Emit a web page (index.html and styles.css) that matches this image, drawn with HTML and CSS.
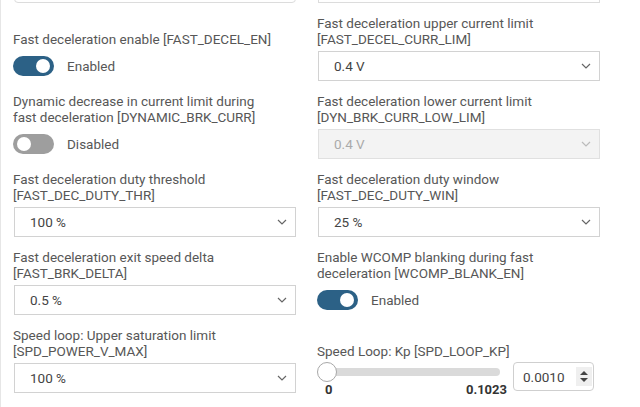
FILE: index.html
```html
<!DOCTYPE html>
<html>
<head>
<meta charset="utf-8">
<link rel="stylesheet" href="styles.css">
</head>
<body>
<div class="panel">
  <div class="grid">
    <div class="cell"><div class="box round"></div></div>
    <div class="cell"><div class="box"></div></div>

    <div class="cell">
      <div class="label">Fast deceleration enable [FAST_DECEL_EN]</div>
      <div class="control"><span class="toggle on"></span><span class="state">Enabled</span></div>
    </div>
    <div class="cell">
      <div class="label">Fast deceleration upper current limit<br>[FAST_DECEL_CURR_LIM]</div>
      <div class="control"><div class="select"><span>0.4 V</span><svg class="chev" width="10" height="6" viewBox="0 0 10 6"><polyline points="1,1 5,5 9,1"/></svg></div></div>
    </div>

    <div class="cell">
      <div class="label">Dynamic decrease in current limit during<br>fast deceleration [DYNAMIC_BRK_CURR]</div>
      <div class="control"><span class="toggle"></span><span class="state">Disabled</span></div>
    </div>
    <div class="cell">
      <div class="label">Fast deceleration lower current limit<br>[DYN_BRK_CURR_LOW_LIM]</div>
      <div class="control"><div class="select disabled"><span>0.4 V</span><svg class="chev" width="10" height="6" viewBox="0 0 10 6"><polyline points="1,1 5,5 9,1"/></svg></div></div>
    </div>

    <div class="cell">
      <div class="label">Fast deceleration duty threshold<br>[FAST_DEC_DUTY_THR]</div>
      <div class="control"><div class="select"><span>100 %</span><svg class="chev" width="10" height="6" viewBox="0 0 10 6"><polyline points="1,1 5,5 9,1"/></svg></div></div>
    </div>
    <div class="cell">
      <div class="label">Fast deceleration duty window<br>[FAST_DEC_DUTY_WIN]</div>
      <div class="control"><div class="select"><span>25 %</span><svg class="chev" width="10" height="6" viewBox="0 0 10 6"><polyline points="1,1 5,5 9,1"/></svg></div></div>
    </div>

    <div class="cell">
      <div class="label">Fast deceleration exit speed delta<br>[FAST_BRK_DELTA]</div>
      <div class="control"><div class="select"><span>0.5 %</span><svg class="chev" width="10" height="6" viewBox="0 0 10 6"><polyline points="1,1 5,5 9,1"/></svg></div></div>
    </div>
    <div class="cell">
      <div class="label">Enable WCOMP blanking during fast<br>deceleration [WCOMP_BLANK_EN]</div>
      <div class="control"><span class="toggle on"></span><span class="state">Enabled</span></div>
    </div>

    <div class="cell">
      <div class="label">Speed loop: Upper saturation limit<br>[SPD_POWER_V_MAX]</div>
      <div class="control"><div class="select"><span>100 %</span><svg class="chev" width="10" height="6" viewBox="0 0 10 6"><polyline points="1,1 5,5 9,1"/></svg></div></div>
    </div>
    <div class="cell">
      <div class="label">Speed Loop: Kp [SPD_LOOP_KP]</div>
      <div class="control top">
        <div class="slider">
          <div class="track"><span class="thumb"></span></div>
          <div class="ticks"><span>0</span><span>0.1023</span></div>
        </div>
        <div class="spin">
          <span>0.0010</span>
          <span class="spin-btn"><svg width="8" height="11" viewBox="0 0 8 11"><polygon points="4,0 8,4 0,4"/><polygon points="0,7 8,7 4,11"/></svg></span>
        </div>
      </div>
    </div>
  </div>
</div>
</body>
</html>
```

FILE: styles.css
```css
html, body {
  margin: 0;
  padding: 0;
  background: #fff;
}

body {
  font-family: Roboto, "Liberation Sans", sans-serif;
  font-size: 13.5px;
  color: #575757;
}

.panel {
  height: 407px;
  overflow: hidden;
  border-left: 1px solid #e6e6e6;
  padding-left: 12px;
  box-sizing: border-box;
}

.grid {
  display: grid;
  grid-template-columns: 283px 283px;
  column-gap: 21px;
  row-gap: 12px;
  margin-top: -27px;
  align-items: end;
}

.cell {
  display: flex;
  flex-direction: column;
}

.box {
  height: 30px;
  box-sizing: border-box;
  border: 1px solid #dcdcdc;
  margin-left: 1px;
}

.box.round {
  border-radius: 4px;
}

.label {
  line-height: 16px;
  margin-bottom: 4px;
  white-space: nowrap;
}

.control {
  height: 30px;
  display: flex;
  align-items: center;
}

.control.top {
  align-items: flex-start;
}

.select {
  box-sizing: border-box;
  height: 30px;
  width: 100%;
  margin-left: 1px;
  border: 1px solid #d2d2d2;
  background: #fff;
  display: flex;
  align-items: center;
  justify-content: space-between;
  padding: 0 8px 0 15px;
  color: #444;
}

.chev polyline {
  fill: none;
  stroke: #666;
  stroke-width: 1.2;
}

.select.disabled {
  background: #f3f3f3;
  border-color: #e0e0e0;
  color: #aaa;
}

.select.disabled .chev polyline {
  stroke: #bbb;
}

.toggle {
  position: relative;
  width: 41px;
  height: 20px;
  border-radius: 10px;
  background: #9e9e9e;
  flex: none;
}

.toggle::after {
  content: "";
  position: absolute;
  top: 3px;
  left: 4px;
  width: 14px;
  height: 14px;
  border-radius: 50%;
  background: #fff;
}

.toggle.on {
  background: #2c6186;
}

.toggle.on::after {
  left: auto;
  right: 4px;
}

.state {
  margin-left: 13px;
  color: #575757;
}

.slider {
  width: 190px;
  flex: none;
}

.track {
  position: relative;
  height: 8px;
  margin: 5px 7px 0 3px;
  border-radius: 4px;
  background: #dadada;
}

.thumb {
  position: absolute;
  left: -3px;
  top: -6px;
  width: 18px;
  height: 18px;
  border: 1px solid #a8a8a8;
  border-radius: 50%;
  background: #fff;
}

.ticks {
  display: flex;
  justify-content: space-between;
  margin-top: 6px;
  padding-left: 8px;
  line-height: 16px;
  font-size: 13px;
  font-weight: bold;
  color: #333;
}

.spin {
  box-sizing: border-box;
  width: 81px;
  height: 29px;
  margin: -1px 0 0 6px;
  border: 1px solid #cfcfcf;
  border-radius: 4px;
  display: flex;
  align-items: center;
  justify-content: space-between;
  padding: 0 1px 0 9px;
  color: #444;
}

.spin-btn {
  width: 16px;
  height: 19px;
  background: #efefef;
  display: flex;
  align-items: center;
  justify-content: center;
}

.spin-btn polygon {
  fill: #444;
}
```
